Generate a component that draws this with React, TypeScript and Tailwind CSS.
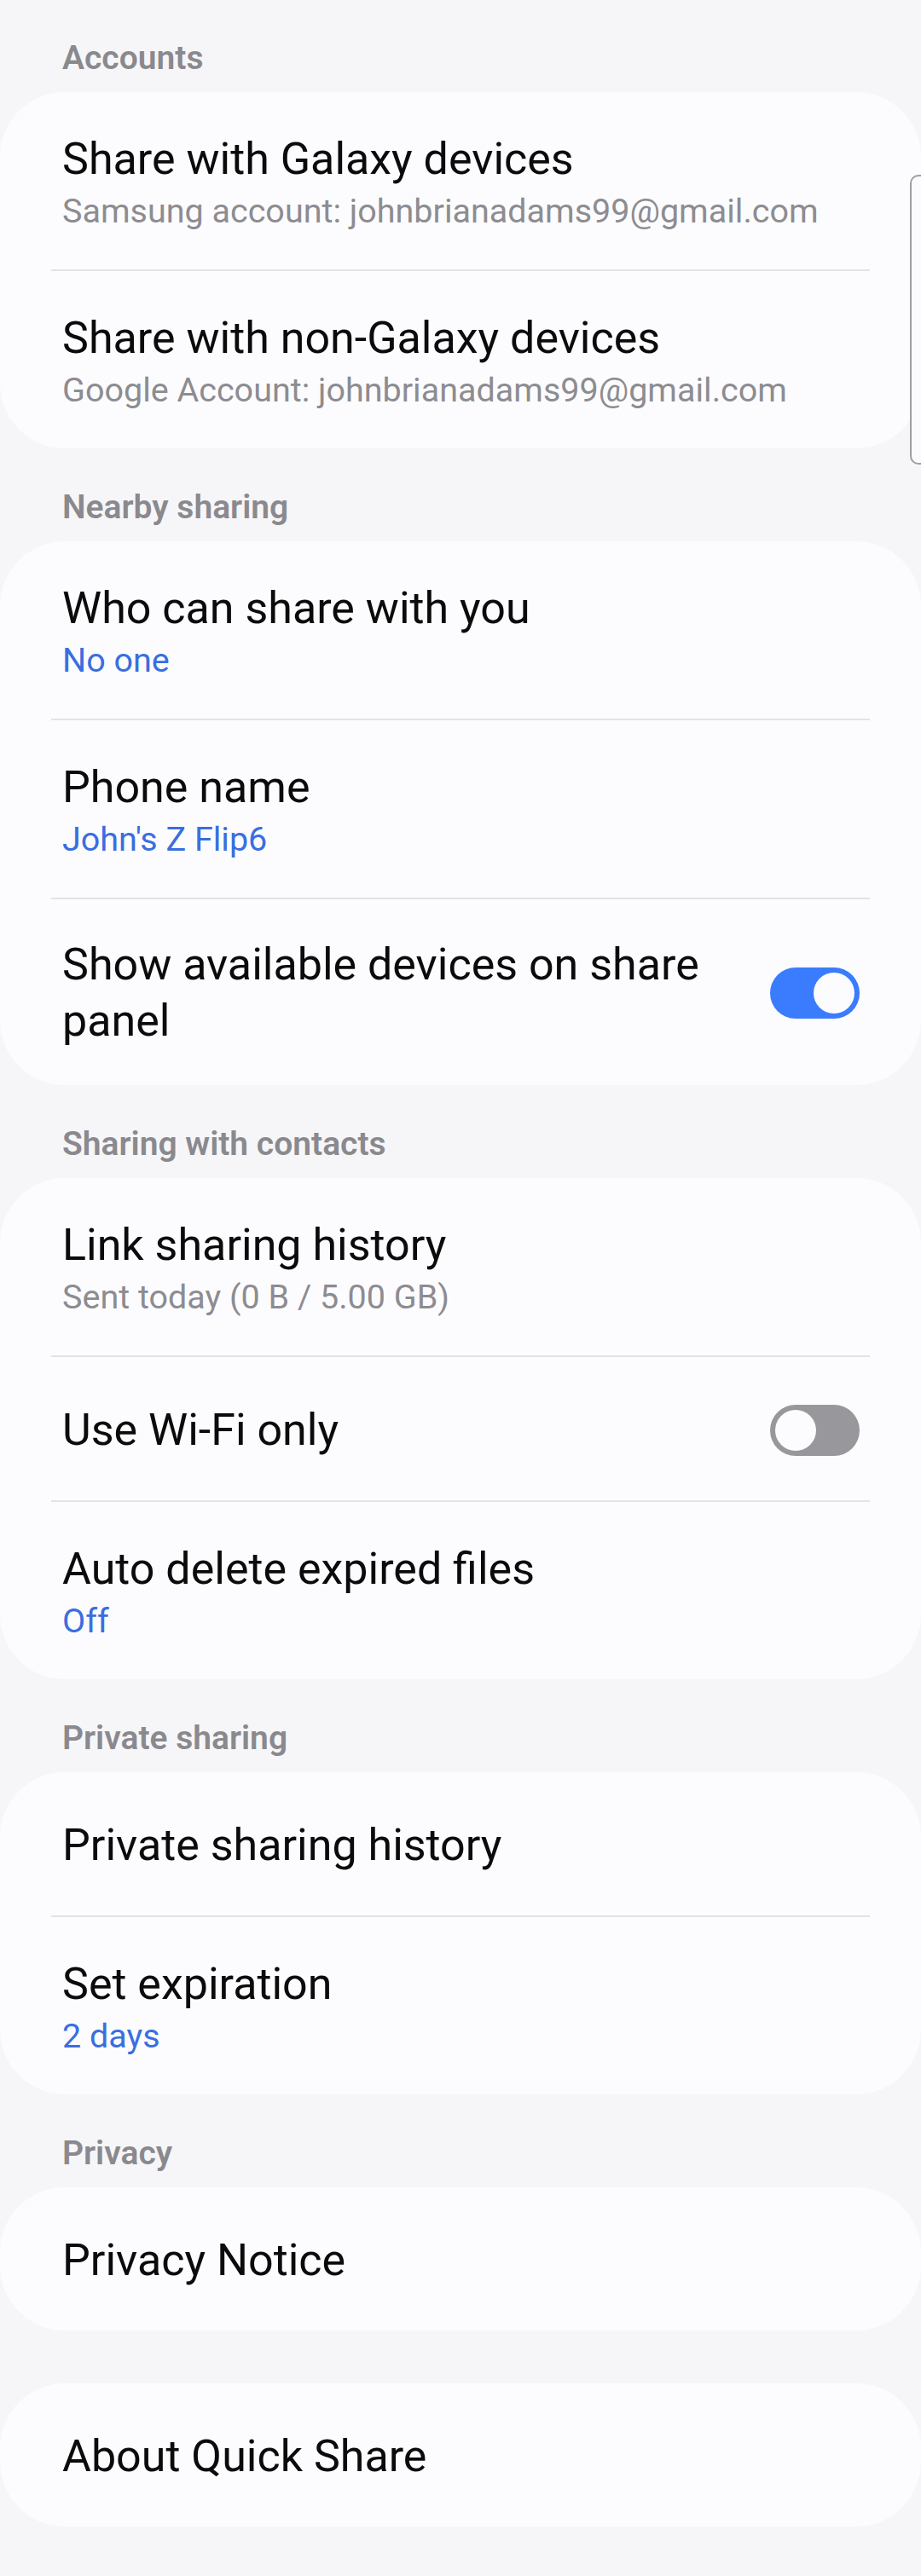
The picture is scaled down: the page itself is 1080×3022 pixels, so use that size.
import type { ReactNode } from "react";

type Row = {
  title: string;
  sub?: string;
  subTone?: "gray" | "blue";
  toggle?: "on" | "off";
  twoLine?: boolean;
};

type Section = {
  header?: string;
  rows: Row[];
};

const SECTIONS: Section[] = [
  {
    header: "Accounts",
    rows: [
      { title: "Share with Galaxy devices", sub: "Samsung account: johnbrianadams99@gmail.com", subTone: "gray" },
      { title: "Share with non-Galaxy devices", sub: "Google Account: johnbrianadams99@gmail.com", subTone: "gray" }
    ]
  },
  {
    header: "Nearby sharing",
    rows: [
      { title: "Who can share with you", sub: "No one", subTone: "blue" },
      { title: "Phone name", sub: "John's Z Flip6", subTone: "blue" },
      { title: "Show available devices on share panel", toggle: "on", twoLine: true }
    ]
  },
  {
    header: "Sharing with contacts",
    rows: [
      { title: "Link sharing history", sub: "Sent today (0 B / 5.00 GB)", subTone: "gray" },
      { title: "Use Wi-Fi only", toggle: "off" },
      { title: "Auto delete expired files", sub: "Off", subTone: "blue" }
    ]
  },
  {
    header: "Private sharing",
    rows: [
      { title: "Private sharing history" },
      { title: "Set expiration", sub: "2 days", subTone: "blue" }
    ]
  },
  {
    header: "Privacy",
    rows: [{ title: "Privacy Notice" }]
  },
  {
    rows: [{ title: "About Quick Share" }]
  }
];

function Toggle({ on }: { on: boolean }) {
  return (
    <div
      className={`flex h-[60px] w-[105px] shrink-0 items-center rounded-full p-[6px] ${
        on ? "justify-end bg-[#3a7cfd]" : "justify-start bg-[#98979c]"
      }`}
    >
      <div className="h-[48px] w-[48px] rounded-full bg-[#fcfcfe]" />
    </div>
  );
}

function SettingRow({ row }: { row: Row }) {
  let padding = "pt-[53px] pb-[49px]";
  if (row.sub) padding = "pt-[46px] pb-[40px]";
  if (row.twoLine) padding = "pt-[44px] pb-[42px]";

  return (
    <div className={`flex items-center pl-[73px] pr-[72px] ${padding}`}>
      <div className={`min-w-0 flex-1 ${row.toggle ? "pr-[48px]" : ""}`}>
        <div className="text-[52px] leading-[66px] text-[#0b0b0c]">{row.title}</div>
        {row.sub ? (
          <div
            className={`whitespace-nowrap text-[39.5px] leading-[56px] ${
              row.subTone === "blue" ? "text-[#3a6ee0]" : "text-[#8d8c91]"
            }`}
          >
            {row.sub}
          </div>
        ) : null}
      </div>
      {row.toggle ? <Toggle on={row.toggle === "on"} /> : null}
    </div>
  );
}

function Card({ children }: { children: ReactNode }) {
  return <div className="rounded-[76px] bg-[#fcfcfe]">{children}</div>;
}

export default function App() {
  return (
    <div
      className="relative min-h-[3022px] w-[1080px] bg-[#f6f6f8]"
      style={{ fontFamily: "Roboto, 'Noto Sans', sans-serif" }}
    >
      {SECTIONS.map((section, sectionIndex) => (
        <section key={sectionIndex}>
          {section.header ? (
            <h2
              className={`pl-[73px] pb-[15px] text-[39px] font-semibold leading-[50px] text-[#8a898e] ${
                sectionIndex === 0 ? "pt-[43px]" : "pt-[44px]"
              }`}
            >
              {section.header}
            </h2>
          ) : (
            <div className="h-[62px]" />
          )}
          <Card>
            {section.rows.map((row, rowIndex) => (
              <div key={row.title}>
                {rowIndex > 0 ? <div className="mx-[60px] h-[2px] bg-[#e3e3e5]" /> : null}
                <SettingRow row={row} />
              </div>
            ))}
          </Card>
        </section>
      ))}

      {/* fast scroll handle on the right edge */}
      <div className="absolute left-[1067px] top-[205px] h-[340px] w-[24px] rounded-[10px] border-2 border-[#9f9fa3] bg-[#fbfbfd]" />
    </div>
  );
}
